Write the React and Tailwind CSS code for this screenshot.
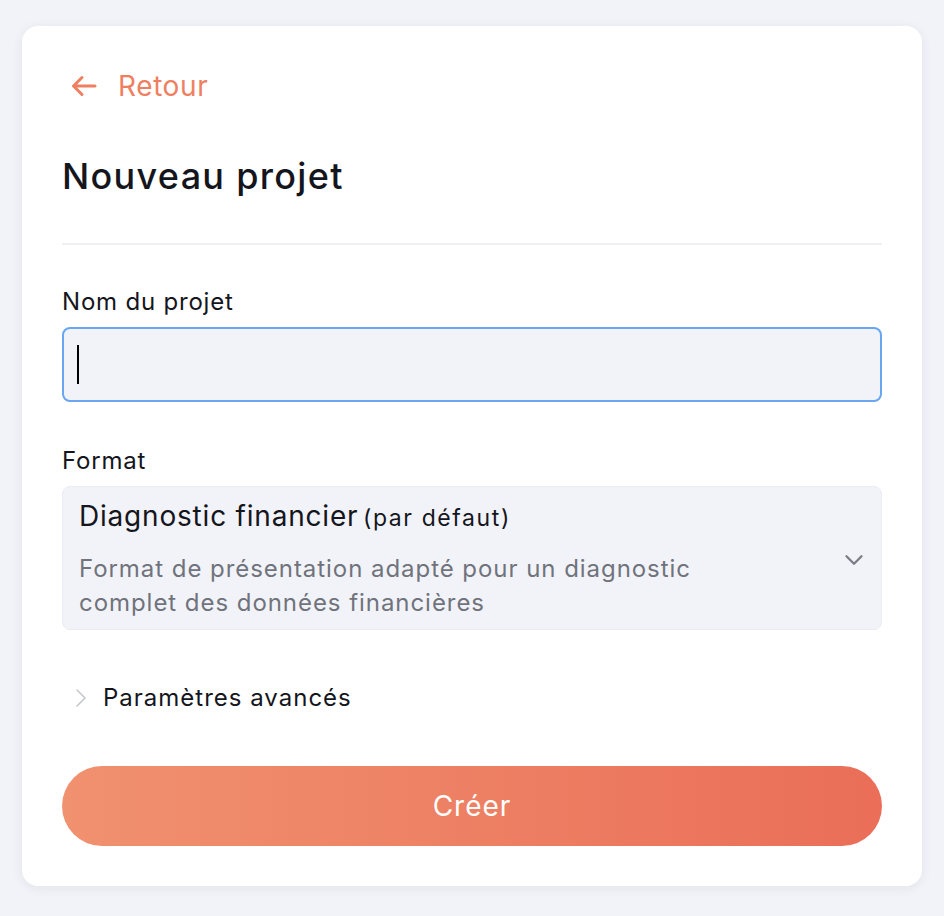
import React, { useState } from "react";
import { ChevronDown, ChevronRight } from "lucide-react";

const font = { fontFamily: "Inter, 'Noto Sans', sans-serif" };

export default function App() {
  const [name, setName] = useState("");
  const [open, setOpen] = useState(false);

  return (
    <div className="min-h-screen bg-[#f2f3f8] pt-[26px] pb-[30px]" style={font}>
      <div className="mx-auto w-[900px] bg-white rounded-2xl shadow-[0_2px_12px_rgba(20,24,60,0.07)] px-10 pt-[44px] pb-10">
        {/* back link */}
        <button className="flex items-center gap-[21px] h-8 pl-[9px] text-[#ef7f61] cursor-pointer">
          <svg width="26" height="22" viewBox="0 0 26 22" fill="none" stroke="currentColor" strokeWidth="3" strokeLinecap="round" strokeLinejoin="round">
            <path d="M24 11H2.5M11 2.5 2.5 11l8.5 8.5" />
          </svg>
          <span className="text-[28px] leading-8 tracking-[0.6px]">Retour</span>
        </button>

        <h1 className="mt-[54px] text-[36px] leading-10 font-medium text-[#15161d] tracking-[1.3px]">
          Nouveau projet
        </h1>

        <div className="mt-[47px] h-[2px] bg-[#eeeff3]" />

        {/* name */}
        <label className="block mt-[42px] text-[24px] leading-[30px] tracking-[0.8px] text-[#15161d]">
          Nom du projet
        </label>
        <div className="relative mt-[10px]">
          <input
            value={name}
            onChange={(e) => setName(e.target.value)}
            className="w-full h-[75px] px-4 bg-[#f2f3f8] border-2 border-[#6aa6f0] rounded-lg text-[26px] text-[#15161d] outline-none caret-black"
          />
          {name === "" && (
            <span className="pointer-events-none absolute left-[15px] top-[18px] w-[2px] h-[39px] bg-black" />
          )}
        </div>

        {/* format */}
        <label className="block mt-[44px] text-[24px] leading-[30px] tracking-[0.8px] text-[#15161d]">
          Format
        </label>
        <div className="mt-[10px] flex items-center justify-between h-[144px] pl-4 pr-3 pt-[15px] pb-[12px] bg-[#f2f3f8] border border-[#ebecf1] rounded-lg cursor-pointer">
          <div>
            <div className="leading-8 text-[#15161d]">
              <span className="text-[28px] tracking-[0.8px]">Diagnostic financier</span>{" "}
              <span className="text-[23px] tracking-[1.6px]">(par défaut)</span>
            </div>
            <p className="mt-4 text-[24px] leading-[34px] tracking-[0.95px] text-[#70737c]">
              Format de présentation adapté pour un diagnostic
              <br />
              complet des données financières
            </p>
          </div>
          <ChevronDown size={30} strokeWidth={1.9} className="text-[#7b7e86]" />
        </div>

        {/* advanced */}
        <button
          onClick={() => setOpen(!open)}
          className="mt-[53px] flex items-center gap-[6px] h-[30px] pl-[3px] cursor-pointer"
        >
          <ChevronRight size={32} strokeWidth={1.2} className="text-[#c4c6cc]" />
          <span className="text-[24px] leading-[30px] tracking-[1px] text-[#15161d]">Paramètres avancés</span>
        </button>

        <button className="mt-[53px] w-full h-20 rounded-full bg-linear-to-r from-[#f0916f] to-[#ea6e58] text-white text-[28px] tracking-[1px] cursor-pointer">
          Créer
        </button>
      </div>
    </div>
  );
}
